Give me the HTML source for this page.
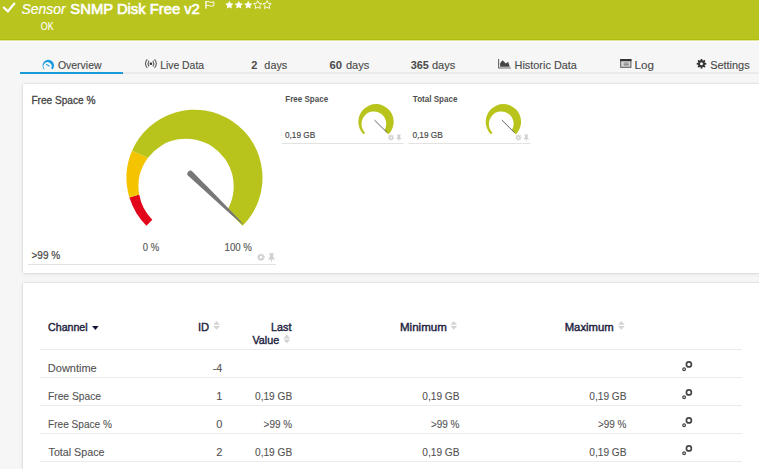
<!DOCTYPE html>
<html><head><meta charset="utf-8">
<style>
html,body{margin:0;padding:0;width:759px;height:469px;overflow:hidden;background:#f6f6f6;}
body{position:relative;font-family:"Liberation Sans",sans-serif;}
.t{position:absolute;white-space:nowrap;line-height:1;}
#hdr{position:absolute;left:0;top:0;width:759px;height:40px;background:#b9c41e;}
#hdr:after{content:"";position:absolute;left:0;right:0;top:39px;height:1px;background:#b1bc0e;}
#hdrsh{position:absolute;left:0;top:40px;width:759px;height:2px;background:linear-gradient(#e0e49c 0,#e0e49c 50%,#fcfcfc 50%,#fcfcfc 100%);}
.card{position:absolute;left:23px;width:740px;background:#fff;box-shadow:0 0 1.5px rgba(0,0,0,0.2), 0 1px 5px rgba(0,0,0,0.08);}
svg{position:absolute;left:0;top:0;}
</style></head><body>
<div id="hdr"></div><div id="hdrsh"></div>
<div style="position:absolute;left:20px;top:72px;width:739px;height:2px;background:#eaeaea"></div>
<div style="position:absolute;left:20px;top:72px;width:103px;height:2px;background:#1b9ad8"></div>
<div class="card" style="top:84px;height:189px"></div>
<div class="card" style="top:283px;height:200px"></div>
<svg width="759" height="469" viewBox="0 0 759 469">
<!-- header icons -->
<path d="M3.2,7.0 L7.9,11.4 L14.8,3.1" fill="none" stroke="#fff" stroke-width="2.3"/>
<rect x="205.3" y="1" width="1.3" height="7.7" fill="#fff"/><path d="M206.4,1.8 C208.2,0.6 210.6,3.6 213.9,1.8 V5.6 C210.6,7.4 208.2,4.4 206.4,5.6" fill="none" stroke="#fff" stroke-width="0.95"/>
<polygon points="229.35,0.70 230.61,3.26 233.44,3.67 231.39,5.66 231.88,8.48 229.35,7.15 226.82,8.48 227.31,5.66 225.26,3.67 228.09,3.26" fill="#fff"/><polygon points="238.80,0.70 240.06,3.26 242.89,3.67 240.84,5.66 241.33,8.48 238.80,7.15 236.27,8.48 236.76,5.66 234.71,3.67 237.54,3.26" fill="#fff"/><polygon points="248.25,0.70 249.51,3.26 252.34,3.67 250.29,5.66 250.78,8.48 248.25,7.15 245.72,8.48 246.21,5.66 244.16,3.67 246.99,3.26" fill="#fff"/><polygon points="257.70,0.70 258.96,3.26 261.79,3.67 259.74,5.66 260.23,8.48 257.70,7.15 255.17,8.48 255.66,5.66 253.61,3.67 256.44,3.26" fill="none" stroke="#fff" stroke-width="0.9"/><polygon points="267.15,0.70 268.41,3.26 271.24,3.67 269.19,5.66 269.68,8.48 267.15,7.15 264.62,8.48 265.11,5.66 263.06,3.67 265.89,3.26" fill="none" stroke="#fff" stroke-width="0.9"/>
<!-- tab icons -->
<path d="M44.20,69.60 A5.8,5.8 0 1 1 52.40,69.60 L51.08,68.28 A4.06,4.06 0 1 0 44.70,69.10 Z" fill="#1d9be0"/>
<line x1="46.1" y1="64.1" x2="49.4" y2="66.3" stroke="#1d9be0" stroke-width="1.1"/>
<circle cx="150.9" cy="63.8" r="1.3" fill="#333"/>
<path d="M148.9,60.8 A5.5,5.5 0 0 0 148.9,66.4 M152.9,60.8 A5.5,5.5 0 0 1 152.9,66.4" fill="none" stroke="#555" stroke-width="1.1"/>
<path d="M147.3,59.3 A6,6 0 0 0 147.3,67.9 M154.5,59.3 A6,6 0 0 1 154.5,67.9" fill="none" stroke="#555" stroke-width="1.1"/>
<path d="M498.6,59 V68 H510.8" fill="none" stroke="#666" stroke-width="1.1"/>
<path d="M500.1,66.8 V63.2 L502.5,60.2 L505.9,63.4 L508.1,61.8 L509.8,66.8 Z" fill="#444"/>
<rect x="620.7" y="59.5" width="10.2" height="7.8" fill="#d8d8d8" stroke="#555" stroke-width="1"/>
<rect x="620.2" y="59" width="11.2" height="2.2" fill="#333"/>
<rect x="623.7" y="62" width="5" height="4.6" fill="#b0b0b0"/>
<rect x="623.7" y="63.8" width="5" height="0.8" fill="#777"/>
<rect x="700.64" y="59.00" width="1.73" height="4.80" fill="#333" transform="rotate(0 701.5 63.8)"/><rect x="700.64" y="59.00" width="1.73" height="4.80" fill="#333" transform="rotate(45 701.5 63.8)"/><rect x="700.64" y="59.00" width="1.73" height="4.80" fill="#333" transform="rotate(90 701.5 63.8)"/><rect x="700.64" y="59.00" width="1.73" height="4.80" fill="#333" transform="rotate(135 701.5 63.8)"/><rect x="700.64" y="59.00" width="1.73" height="4.80" fill="#333" transform="rotate(180 701.5 63.8)"/><rect x="700.64" y="59.00" width="1.73" height="4.80" fill="#333" transform="rotate(225 701.5 63.8)"/><rect x="700.64" y="59.00" width="1.73" height="4.80" fill="#333" transform="rotate(270 701.5 63.8)"/><rect x="700.64" y="59.00" width="1.73" height="4.80" fill="#333" transform="rotate(315 701.5 63.8)"/><circle cx="701.5" cy="63.8" r="3.46" fill="#333"/><circle cx="701.5" cy="63.8" r="1.54" fill="#f6f6f6"/>
<!-- card underlines -->
<rect x="28" y="264" width="248" height="1" fill="#e2e2e2"/>
<rect x="281.5" y="143" width="122" height="1" fill="#e2e2e2"/>
<rect x="408.5" y="143" width="122" height="1" fill="#e2e2e2"/>
<rect x="260.32" y="253.40" width="1.37" height="3.80" fill="#d0d0d0" transform="rotate(0 261 257.2)"/><rect x="260.32" y="253.40" width="1.37" height="3.80" fill="#d0d0d0" transform="rotate(45 261 257.2)"/><rect x="260.32" y="253.40" width="1.37" height="3.80" fill="#d0d0d0" transform="rotate(90 261 257.2)"/><rect x="260.32" y="253.40" width="1.37" height="3.80" fill="#d0d0d0" transform="rotate(135 261 257.2)"/><rect x="260.32" y="253.40" width="1.37" height="3.80" fill="#d0d0d0" transform="rotate(180 261 257.2)"/><rect x="260.32" y="253.40" width="1.37" height="3.80" fill="#d0d0d0" transform="rotate(225 261 257.2)"/><rect x="260.32" y="253.40" width="1.37" height="3.80" fill="#d0d0d0" transform="rotate(270 261 257.2)"/><rect x="260.32" y="253.40" width="1.37" height="3.80" fill="#d0d0d0" transform="rotate(315 261 257.2)"/><circle cx="261" cy="257.2" r="2.74" fill="#d0d0d0"/><circle cx="261" cy="257.2" r="1.22" fill="#fff"/>
<g transform="translate(269.1,253.2) scale(1.0)" fill="#d0d0d0"><path d="M0,0 h4.8 v1 l-0.8,0.4 v2.5 l1.5,1.4 v0.9 h-6.2 v-0.9 l1.5,-1.4 v-2.5 l-0.8,-0.4 z"/><rect x="2" y="6" width="0.9" height="2.6"/></g>
<rect x="390.46" y="134.60" width="1.08" height="3.00" fill="#d0d0d0" transform="rotate(0 391 137.6)"/><rect x="390.46" y="134.60" width="1.08" height="3.00" fill="#d0d0d0" transform="rotate(45 391 137.6)"/><rect x="390.46" y="134.60" width="1.08" height="3.00" fill="#d0d0d0" transform="rotate(90 391 137.6)"/><rect x="390.46" y="134.60" width="1.08" height="3.00" fill="#d0d0d0" transform="rotate(135 391 137.6)"/><rect x="390.46" y="134.60" width="1.08" height="3.00" fill="#d0d0d0" transform="rotate(180 391 137.6)"/><rect x="390.46" y="134.60" width="1.08" height="3.00" fill="#d0d0d0" transform="rotate(225 391 137.6)"/><rect x="390.46" y="134.60" width="1.08" height="3.00" fill="#d0d0d0" transform="rotate(270 391 137.6)"/><rect x="390.46" y="134.60" width="1.08" height="3.00" fill="#d0d0d0" transform="rotate(315 391 137.6)"/><circle cx="391" cy="137.6" r="2.16" fill="#d0d0d0"/><circle cx="391" cy="137.6" r="0.96" fill="#fff"/>
<g transform="translate(397.0,134.4) scale(0.8)" fill="#d0d0d0"><path d="M0,0 h4.8 v1 l-0.8,0.4 v2.5 l1.5,1.4 v0.9 h-6.2 v-0.9 l1.5,-1.4 v-2.5 l-0.8,-0.4 z"/><rect x="2" y="6" width="0.9" height="2.6"/></g>
<rect x="517.86" y="134.60" width="1.08" height="3.00" fill="#d0d0d0" transform="rotate(0 518.4 137.6)"/><rect x="517.86" y="134.60" width="1.08" height="3.00" fill="#d0d0d0" transform="rotate(45 518.4 137.6)"/><rect x="517.86" y="134.60" width="1.08" height="3.00" fill="#d0d0d0" transform="rotate(90 518.4 137.6)"/><rect x="517.86" y="134.60" width="1.08" height="3.00" fill="#d0d0d0" transform="rotate(135 518.4 137.6)"/><rect x="517.86" y="134.60" width="1.08" height="3.00" fill="#d0d0d0" transform="rotate(180 518.4 137.6)"/><rect x="517.86" y="134.60" width="1.08" height="3.00" fill="#d0d0d0" transform="rotate(225 518.4 137.6)"/><rect x="517.86" y="134.60" width="1.08" height="3.00" fill="#d0d0d0" transform="rotate(270 518.4 137.6)"/><rect x="517.86" y="134.60" width="1.08" height="3.00" fill="#d0d0d0" transform="rotate(315 518.4 137.6)"/><circle cx="518.4" cy="137.6" r="2.16" fill="#d0d0d0"/><circle cx="518.4" cy="137.6" r="0.96" fill="#fff"/>
<g transform="translate(524.4,134.4) scale(0.8)" fill="#d0d0d0"><path d="M0,0 h4.8 v1 l-0.8,0.4 v2.5 l1.5,1.4 v0.9 h-6.2 v-0.9 l1.5,-1.4 v-2.5 l-0.8,-0.4 z"/><rect x="2" y="6" width="0.9" height="2.6"/></g>
<path d="M146.42,225.78 A68,68 0 0 1 129.44,197.49 L139.21,194.52 A47.6,47.6 0 0 0 152.34,219.86 Z" fill="#e2061a"/>
<path d="M129.44,197.49 A68,68 0 0 1 132.05,150.79 L148.06,157.69 A47.6,47.6 0 0 0 139.21,194.52 Z" fill="#f5c400"/>
<path d="M132.05,150.79 A68,68 0 1 1 242.58,225.78 L227.17,210.37 A47.6,47.6 0 0 0 148.06,157.69 Z" fill="#b8c41b"/>
<path d="M188.22,175.86 L192.07,179.37 L195.91,182.86 L199.76,186.36 L203.61,189.86 L207.47,193.35 L211.33,196.83 L215.19,200.32 L219.06,203.79 L222.93,207.26 L226.81,210.73 L230.71,214.18 L234.61,217.62 L238.55,221.02 L242.59,224.32 L243.01,223.88 L239.55,219.98 L235.99,216.18 L232.39,212.42 L228.79,208.67 L225.17,204.94 L221.54,201.21 L217.91,197.48 L214.27,193.77 L210.63,190.05 L206.99,186.34 L203.34,182.64 L199.69,178.94 L196.03,175.23 L192.38,171.54 A3.0,3.0 0 0 0 188.22,175.86 Z" fill="#777"/>
<path d="M363.48,134.32 A17.7,17.7 0 1 1 388.52,134.32 L384.43,130.23 A12.35,12.35 0 1 0 365.17,132.63 Z" fill="#b8c41b"/>
<line x1="374.5" y1="120.1" x2="387.3" y2="132.8" stroke="#666" stroke-width="1.0"/>
<path d="M490.88,134.32 A17.7,17.7 0 1 1 515.92,134.32 L511.83,130.23 A12.35,12.35 0 1 0 492.57,132.63 Z" fill="#b8c41b"/>
<line x1="501.9" y1="120.1" x2="514.7" y2="132.8" stroke="#666" stroke-width="1.0"/>
<!-- table -->
<rect x="40" y="349" width="702" height="1" fill="#ebebeb"/><rect x="40" y="377" width="702" height="1" fill="#ebebeb"/><rect x="40" y="405" width="702" height="1" fill="#ebebeb"/><rect x="40" y="433" width="702" height="1" fill="#ebebeb"/><rect x="40" y="461" width="702" height="1" fill="#ebebeb"/>
<path d="M92.1,326 h6.5 l-3.25,3.9 z" fill="#101535"/>
<path d="M213.2,324.7 h6.8 l-3.4,-3.8 z M213.2,325.9 h6.8 l-3.4,3.9 z" fill="#d4d4d4"/><path d="M283.4,338.40000000000003 h6.8 l-3.4,-3.8 z M283.4,339.6 h6.8 l-3.4,3.9 z" fill="#d4d4d4"/><path d="M450.4,324.7 h6.8 l-3.4,-3.8 z M450.4,325.9 h6.8 l-3.4,3.9 z" fill="#d4d4d4"/><path d="M617.9,324.7 h6.8 l-3.4,-3.8 z M617.9,325.9 h6.8 l-3.4,3.9 z" fill="#d4d4d4"/>
<circle cx="688.9" cy="364.4" r="2.5" fill="none" stroke="#474747" stroke-width="1.7"/><circle cx="684.1" cy="369.2" r="1.35" fill="none" stroke="#474747" stroke-width="1.2"/><circle cx="688.9" cy="392.4" r="2.5" fill="none" stroke="#474747" stroke-width="1.7"/><circle cx="684.1" cy="397.2" r="1.35" fill="none" stroke="#474747" stroke-width="1.2"/><circle cx="688.9" cy="420.4" r="2.5" fill="none" stroke="#474747" stroke-width="1.7"/><circle cx="684.1" cy="425.2" r="1.35" fill="none" stroke="#474747" stroke-width="1.2"/><circle cx="688.9" cy="448.4" r="2.5" fill="none" stroke="#474747" stroke-width="1.7"/><circle cx="684.1" cy="453.2" r="1.35" fill="none" stroke="#474747" stroke-width="1.2"/>
</svg>
<svg width="759" height="469" style="position:absolute;left:0;top:0" font-family="Liberation Sans"><text transform="translate(21.58,13.80) scale(0.957,1)" font-size="14.57" font-weight="400" font-style="italic" fill="#fff" stroke="#fff" stroke-width="0.2">Sensor</text>
<text transform="translate(70.36,13.80) scale(1.049,1)" font-size="14.11" font-weight="400" font-style="normal" fill="#fff" stroke="#fff" stroke-width="0.6">SNMP Disk Free v2</text>
<text transform="translate(40.85,29.90) scale(0.832,1)" font-size="10.71" font-weight="400" font-style="normal" fill="#fff" stroke="#fff" stroke-width="0.1">OK</text>
<text transform="translate(57.98,68.80) scale(0.979,1)" font-size="10.68" font-weight="400" font-style="normal" fill="#4a4a4a" stroke="#4a4a4a" stroke-width="0.12">Overview</text>
<text transform="translate(160.17,68.80) scale(0.974,1)" font-size="10.68" font-weight="400" font-style="normal" fill="#4a4a4a" stroke="#4a4a4a" stroke-width="0.12">Live Data</text>
<text transform="translate(251.17,68.80) scale(0.989,1)" font-size="11.14" font-weight="700" font-style="normal" fill="#4a4a4a">2</text>
<text transform="translate(264.37,68.80) scale(1.014,1)" font-size="10.68" font-weight="400" font-style="normal" fill="#4a4a4a" stroke="#4a4a4a" stroke-width="0.12">days</text>
<text transform="translate(329.55,68.80) scale(1.011,1)" font-size="11.14" font-weight="700" font-style="normal" fill="#4a4a4a">60</text>
<text transform="translate(345.96,68.80) scale(1.037,1)" font-size="10.68" font-weight="400" font-style="normal" fill="#4a4a4a" stroke="#4a4a4a" stroke-width="0.12">days</text>
<text transform="translate(410.68,68.80) scale(0.981,1)" font-size="11.14" font-weight="700" font-style="normal" fill="#4a4a4a">365</text>
<text transform="translate(431.96,68.80) scale(1.037,1)" font-size="10.68" font-weight="400" font-style="normal" fill="#4a4a4a" stroke="#4a4a4a" stroke-width="0.12">days</text>
<text transform="translate(514.53,68.80) scale(1.022,1)" font-size="10.68" font-weight="400" font-style="normal" fill="#4a4a4a" stroke="#4a4a4a" stroke-width="0.12">Historic Data</text>
<text transform="translate(634.57,68.80) scale(1.030,1)" font-size="11.30" font-weight="400" font-style="normal" fill="#4a4a4a" stroke="#4a4a4a" stroke-width="0.12">Log</text>
<text transform="translate(710.15,68.80) scale(1.026,1)" font-size="10.68" font-weight="400" font-style="normal" fill="#4a4a4a" stroke="#4a4a4a" stroke-width="0.12">Settings</text>
<text transform="translate(31.39,104.20) scale(0.957,1)" font-size="10.57" font-weight="400" font-style="normal" fill="#444" stroke="#444" stroke-width="0.3">Free Space %</text>
<text transform="translate(142.72,251.20) scale(0.859,1)" font-size="11.14" font-weight="400" font-style="normal" fill="#555" stroke="#555" stroke-width="0.15">0 %</text>
<text transform="translate(224.53,251.20) scale(0.868,1)" font-size="11.14" font-weight="400" font-style="normal" fill="#555" stroke="#555" stroke-width="0.15">100 %</text>
<text transform="translate(31.50,258.90) scale(0.889,1)" font-size="11.29" font-weight="400" font-style="normal" fill="#444" stroke="#444" stroke-width="0.2">&gt;99 %</text>
<text transform="translate(285.34,102.20) scale(0.951,1)" font-size="8.43" font-weight="700" font-style="normal" fill="#505050">Free Space</text>
<text transform="translate(412.82,102.00) scale(0.966,1)" font-size="8.36" font-weight="700" font-style="normal" fill="#505050">Total Space</text>
<text transform="translate(284.97,138.20) scale(0.965,1)" font-size="8.57" font-weight="400" font-style="normal" fill="#444" stroke="#444" stroke-width="0.15">0,19 GB</text>
<text transform="translate(412.47,138.20) scale(0.965,1)" font-size="8.57" font-weight="400" font-style="normal" fill="#444" stroke="#444" stroke-width="0.15">0,19 GB</text>
<text transform="translate(48.07,330.60) scale(1.006,1)" font-size="10.55" font-weight="400" font-style="normal" fill="#1c2140" stroke="#1c2140" stroke-width="0.4">Channel</text>
<text transform="translate(198.00,331.00) scale(0.963,1)" font-size="11.59" font-weight="400" font-style="normal" fill="#1c2140" stroke="#1c2140" stroke-width="0.4">ID</text>
<text transform="translate(271.03,331.00) scale(0.934,1)" font-size="11.59" font-weight="400" font-style="normal" fill="#1c2140" stroke="#1c2140" stroke-width="0.4">Last</text>
<text transform="translate(252.49,344.00) scale(0.980,1)" font-size="10.96" font-weight="400" font-style="normal" fill="#1c2140" stroke="#1c2140" stroke-width="0.4">Value</text>
<text transform="translate(399.98,331.00) scale(1.053,1)" font-size="10.96" font-weight="400" font-style="normal" fill="#1c2140" stroke="#1c2140" stroke-width="0.4">Minimum</text>
<text transform="translate(564.69,331.00) scale(1.032,1)" font-size="10.96" font-weight="400" font-style="normal" fill="#1c2140" stroke="#1c2140" stroke-width="0.4">Maximum</text>
<text transform="translate(47.82,371.60) scale(1.045,1)" font-size="10.55" font-weight="400" font-style="normal" fill="#535353" stroke="#535353" stroke-width="0.1">Downtime</text>
<text transform="translate(47.98,399.60) scale(0.934,1)" font-size="11.00" font-weight="400" font-style="normal" fill="#535353" stroke="#535353" stroke-width="0.1">Free Space</text>
<text transform="translate(254.99,399.60) scale(0.924,1)" font-size="11.00" font-weight="400" font-style="normal" fill="#535353" stroke="#535353" stroke-width="0.1">0,19 GB</text>
<text transform="translate(422.29,399.60) scale(0.924,1)" font-size="11.00" font-weight="400" font-style="normal" fill="#535353" stroke="#535353" stroke-width="0.1">0,19 GB</text>
<text transform="translate(589.29,399.60) scale(0.924,1)" font-size="11.00" font-weight="400" font-style="normal" fill="#535353" stroke="#535353" stroke-width="0.1">0,19 GB</text>
<text transform="translate(47.99,427.60) scale(0.919,1)" font-size="11.00" font-weight="400" font-style="normal" fill="#535353" stroke="#535353" stroke-width="0.1">Free Space %</text>
<text transform="translate(263.60,427.60) scale(0.906,1)" font-size="11.00" font-weight="400" font-style="normal" fill="#535353" stroke="#535353" stroke-width="0.1">&gt;99 %</text>
<text transform="translate(430.90,427.60) scale(0.906,1)" font-size="11.00" font-weight="400" font-style="normal" fill="#535353" stroke="#535353" stroke-width="0.1">&gt;99 %</text>
<text transform="translate(597.90,427.60) scale(0.906,1)" font-size="11.00" font-weight="400" font-style="normal" fill="#535353" stroke="#535353" stroke-width="0.1">&gt;99 %</text>
<text transform="translate(48.59,455.60) scale(1.014,1)" font-size="10.55" font-weight="400" font-style="normal" fill="#535353" stroke="#535353" stroke-width="0.1">Total Space</text>
<text transform="translate(254.99,455.60) scale(0.924,1)" font-size="11.00" font-weight="400" font-style="normal" fill="#535353" stroke="#535353" stroke-width="0.1">0,19 GB</text>
<text transform="translate(422.29,455.60) scale(0.924,1)" font-size="11.00" font-weight="400" font-style="normal" fill="#535353" stroke="#535353" stroke-width="0.1">0,19 GB</text>
<text transform="translate(589.29,455.60) scale(0.924,1)" font-size="11.00" font-weight="400" font-style="normal" fill="#535353" stroke="#535353" stroke-width="0.1">0,19 GB</text>
<text transform="translate(212.78,371.60) scale(0.951,1)" font-size="11.16" font-weight="400" font-style="normal" fill="#535353" stroke="#535353" stroke-width="0.1">-4</text>
<text transform="translate(216.21,399.60) scale(1.000,1)" font-size="11.16" font-weight="400" font-style="normal" fill="#535353" stroke="#535353" stroke-width="0.1">1</text>
<text transform="translate(216.18,427.60) scale(1.000,1)" font-size="11.00" font-weight="400" font-style="normal" fill="#535353" stroke="#535353" stroke-width="0.1">0</text>
<text transform="translate(216.29,455.60) scale(1.000,1)" font-size="11.00" font-weight="400" font-style="normal" fill="#535353" stroke="#535353" stroke-width="0.1">2</text></svg>
</body></html>
